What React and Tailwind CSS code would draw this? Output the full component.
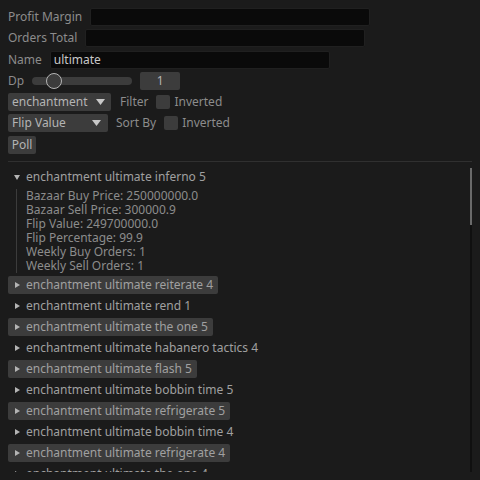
import React from 'react';

const items = [
  { name: 'enchantment ultimate reiterate 4', hl: true },
  { name: 'enchantment ultimate rend 1', hl: false },
  { name: 'enchantment ultimate the one 5', hl: true },
  { name: 'enchantment ultimate habanero tactics 4', hl: false },
  { name: 'enchantment ultimate flash 5', hl: true },
  { name: 'enchantment ultimate bobbin time 5', hl: false },
  { name: 'enchantment ultimate refrigerate 5', hl: true },
  { name: 'enchantment ultimate bobbin time 4', hl: false },
  { name: 'enchantment ultimate refrigerate 4', hl: true },
  { name: 'enchantment ultimate the one 4', hl: false },
];

const details = [
  'Bazaar Buy Price: 250000000.0',
  'Bazaar Sell Price: 300000.9',
  'Flip Value: 249700000.0',
  'Flip Percentage: 99.9',
  'Weekly Buy Orders: 1',
  'Weekly Sell Orders: 1',
];

function DownTri() {
  return (
    <svg width="9" height="6" viewBox="0 0 9 6" className="shrink-0">
      <path d="M0 0 L9 0 L4.5 6 Z" fill="#c8c8c8" />
    </svg>
  );
}

function Header({ name, open, hl }) {
  return (
    <div
      className={`flex h-[18px] w-fit shrink-0 items-center rounded-[2px] pl-[6px] pr-[5px] ${
        hl ? 'bg-[#3c3c3c]' : ''
      }`}
    >
      <span className="flex w-[6px] justify-center">
        {open ? (
          <svg width="6" height="5" viewBox="0 0 6 5">
            <path d="M0 0 L6 0 L3 5 Z" fill="#b4b4b4" />
          </svg>
        ) : (
          <svg width="5" height="6" viewBox="0 0 5 6">
            <path d="M0 0 L5 3 L0 6 Z" fill="#b4b4b4" />
          </svg>
        )}
      </span>
      <span className="ml-[6px] whitespace-nowrap text-[#a0a0a0]">{name}</span>
    </div>
  );
}

function Field({ label, value }) {
  return (
    <div className="flex h-[18px] items-center gap-2">
      <span>{label}</span>
      <div className="flex h-full w-[280px] items-center rounded-[2px] border border-[#202020] bg-[#0a0a0a] px-[3px] text-[#c8c8c8]">
        {value}
      </div>
    </div>
  );
}

export default function App() {
  return (
    <div
      className="flex h-[480px] w-[480px] flex-col overflow-hidden bg-[#1b1b1b] px-2 pt-2 text-[12px] leading-[14px] text-[#8c8c8c]"
      style={{ fontFamily: '"Noto Sans", sans-serif' }}
    >
      <Field label="Profit Margin" value="" />
      <div className="mt-[3px]">
        <Field label="Orders Total" value="" />
      </div>
      <div className="mt-[4px]">
        <Field label="Name" value="ultimate" />
      </div>

      <div className="mt-[3px] flex h-[18px] items-center gap-2">
        <span>Dp</span>
        <div className="relative flex h-full w-[100px] items-center">
          <div className="h-[8px] w-full rounded-full bg-[#3c3c3c]" />
          <div className="absolute left-[14px] top-[1px] h-[16px] w-[16px] rounded-full border border-[#b4b4b4] bg-[#3c3c3c]" />
        </div>
        <div className="flex h-full w-[40px] items-center justify-center rounded-[2px] bg-[#3c3c3c] text-[#b4b4b4]">
          1
        </div>
      </div>

      <div className="mt-[3px] flex h-[18px] items-center">
        <div className="flex h-full w-[103px] items-center justify-between rounded-[2px] bg-[#3c3c3c] pl-[4px] pr-[6px] text-[#b4b4b4]">
          <span>enchantment</span>
          <DownTri />
        </div>
        <span className="ml-[9px]">Filter</span>
        <div className="ml-[8px] h-[14px] w-[14px] rounded-[2px] bg-[#3c3c3c]" />
        <span className="ml-[4px]">Inverted</span>
      </div>

      <div className="mt-[3px] flex h-[18px] items-center">
        <div className="flex h-full w-[100px] items-center justify-between rounded-[2px] bg-[#3c3c3c] pl-[4px] pr-[7px] text-[#b4b4b4]">
          <span>Flip Value</span>
          <DownTri />
        </div>
        <span className="ml-[8px]">Sort By</span>
        <div className="ml-[8px] h-[14px] w-[14px] rounded-[2px] bg-[#3c3c3c]" />
        <span className="ml-[4px]">Inverted</span>
      </div>

      <div className="mt-[4px] flex h-[18px] w-[28px] items-center justify-center rounded-[2px] bg-[#3c3c3c] text-[#b4b4b4]">
        Poll
      </div>

      <div className="mt-[7px] h-px shrink-0 bg-[#303030]" />

      <div className="mt-[6px] flex h-[304px] w-[464px] shrink-0">
        <div className="flex flex-1 flex-col gap-[3px] overflow-hidden">
          <Header name="enchantment ultimate inferno 5" open />
          <div className="ml-[8px] flex h-[84px] shrink-0 flex-col border-l border-[#3c3c3c] pl-[9px]">
            {details.map((d) => (
              <div key={d} className="h-[14px] whitespace-nowrap leading-[14px]">
                {d}
              </div>
            ))}
          </div>
          {items.map((it) => (
            <Header key={it.name} name={it.name} hl={it.hl} />
          ))}
        </div>
        <div className="flex w-[2px] flex-col bg-[#101010]">
          <div className="h-[57px] bg-[#6a6a6a]" />
        </div>
      </div>
    </div>
  );
}
